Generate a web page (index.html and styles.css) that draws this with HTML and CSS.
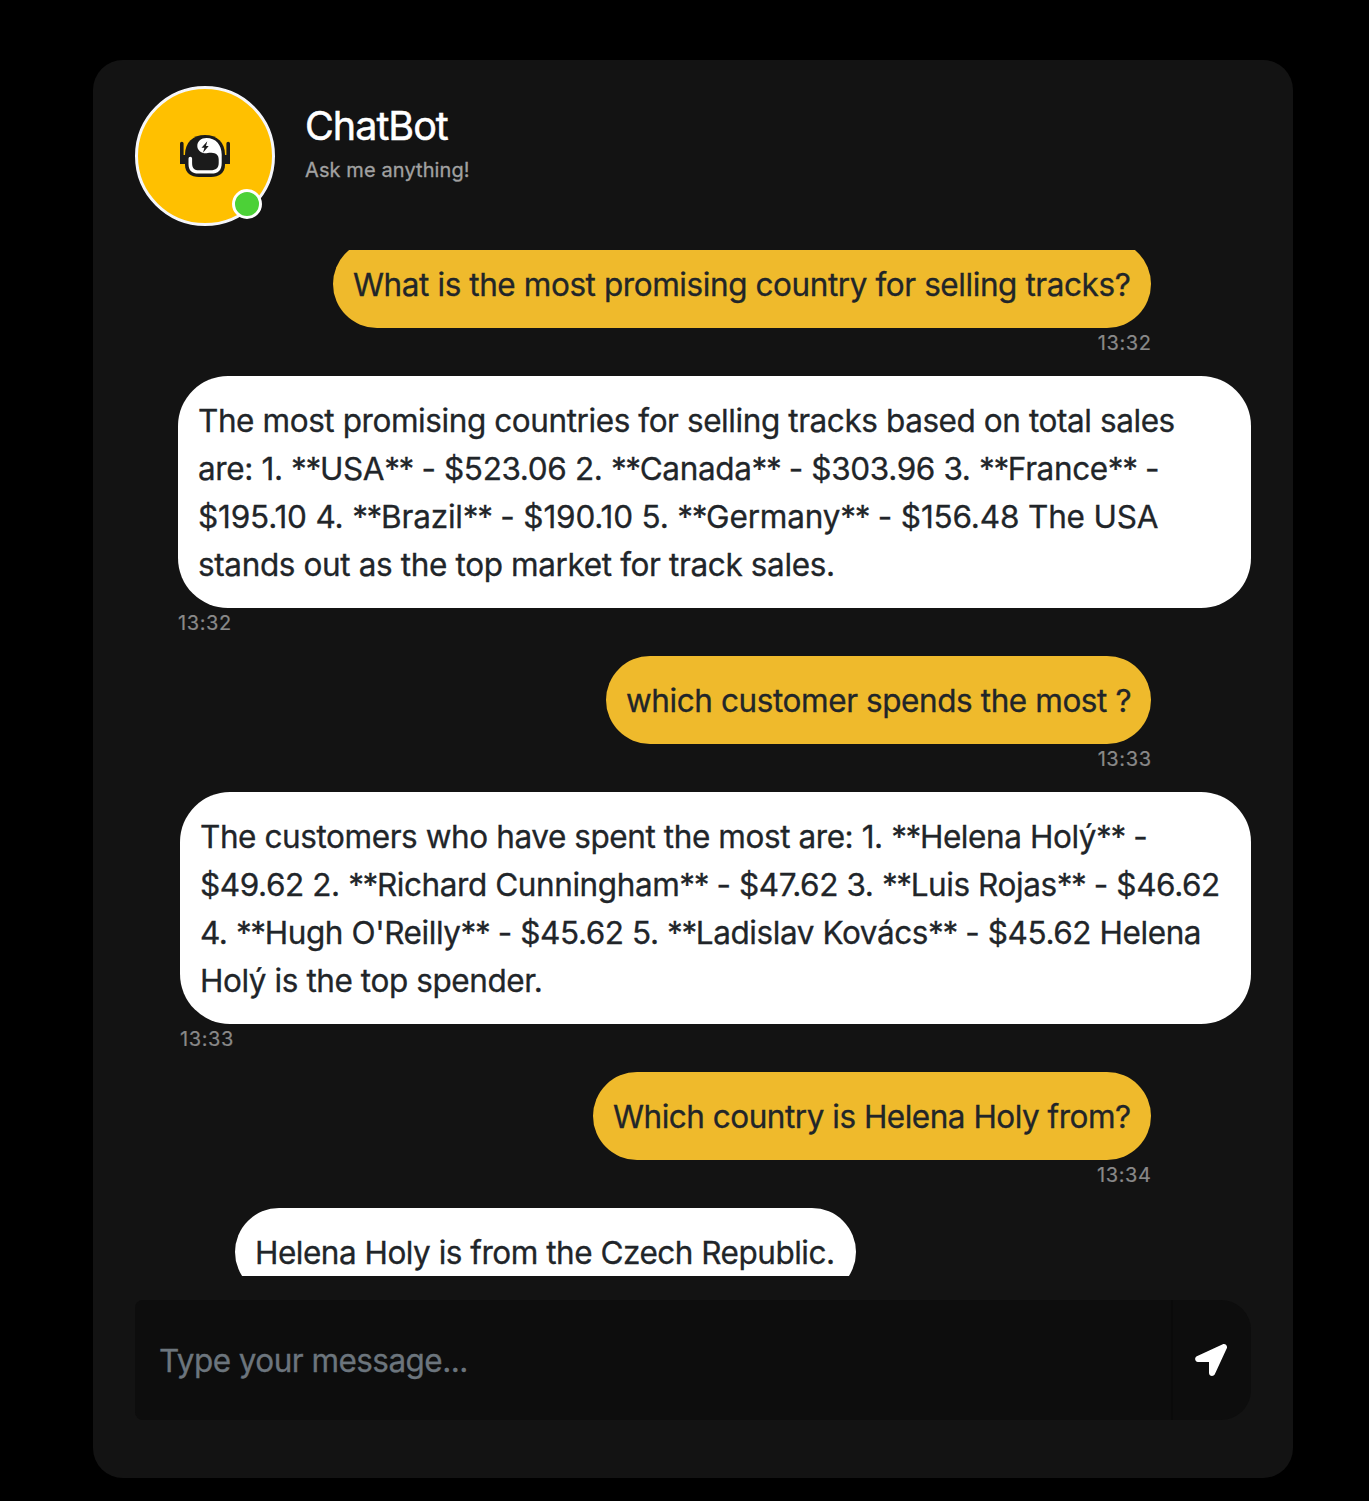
FILE: index.html
```html
<!DOCTYPE html>
<html lang="en">
<head>
<meta charset="utf-8">
<title>ChatBot</title>
<link rel="stylesheet" href="styles.css">
</head>
<body>
<main class="card">
  <header class="card-header">
    <div class="avatar">
      <svg class="robot" viewBox="0 0 50 42" width="50" height="42" aria-hidden="true">
        <path d="M0 8.500a1.800 1.800 0 0 1 3.600 0V20H6V29H0zM50 8.500a1.800 1.800 0 0 0-3.600 0V20H44V29H50z" fill="#1b1b1b"/>
        <path d="M5 19.500C5 7.500 13 0 25 0S45 7.500 45 19.500V30C45 38 39 42 31 42H19C11 42 5 38 5 30z" fill="#1b1b1b"/>
        <path d="M26.500 3C35.500 3 41.700 9.500 41.700 19.500V28C41.700 35.500 38 38.600 31.500 38.600H18.500C12 38.600 8.500 35.500 8.500 29V23.500a1.800 1.800 0 0 1 3.600 0V28C12.100 33.500 14.500 35.300 19 35.300H30.500C36 35.300 38.700 33 38.700 28V24.500C38.700 20 36 17.900 31.500 17.700C28 17.500 26.500 18.800 24 18.200C20 17.300 17.300 14.500 17.300 11C17.300 6.500 21 3 26.500 3z" fill="#fff"/>
        <path d="M27.300 6.300L21.500 12.700H24.400L23 17.700L28.700 11H26z" fill="#1b1b1b"/>
      </svg>
      <span class="status"></span>
    </div>
    <div class="identity">
      <h1 class="name">ChatBot</h1>
      <p class="tagline">Ask me anything!</p>
    </div>
  </header>
  <section class="messages">
    <div class="message user">
      <p class="bubble w-country"><span class="line">What is the most promising country for selling tracks?</span></p>
      <time class="time">13:32</time>
    </div>
    <div class="message bot w-sales">
      <p class="bubble"><span class="line">The most promising countries for selling tracks based on total sales</span><span class="line snug">are: 1. <i>**</i>USA<i>**</i> - $523.06 2. <i>**</i>Canada<i>**</i> - $303.96 3. <i>**</i>France<i>**</i> -</span><span class="line loose">$195.10 4. <i>**</i>Brazil<i>**</i> - $190.10 5. <i>**</i>Germany<i>**</i> - $156.48 The USA</span><span class="line snug">stands out as the top market for track sales.</span></p>
      <time class="time">13:32</time>
    </div>
    <div class="message user">
      <p class="bubble w-customer"><span class="line">which customer spends the most ?</span></p>
      <time class="time">13:33</time>
    </div>
    <div class="message bot w-spenders">
      <p class="bubble"><span class="line">The customers who have spent the most are: 1. <i>**</i>Helena Holý<i>**</i> -</span><span class="line">$49.62 2. <i>**</i>Richard Cunningham<i>**</i> - $47.62 3. <i>**</i>Luis Rojas<i>**</i> - $46.62</span><span class="line">4. <i>**</i>Hugh O'Reilly<i>**</i> - $45.62 5. <i>**</i>Ladislav Kovács<i>**</i> - $45.62 Helena</span><span class="line">Holý is the top spender.</span></p>
      <time class="time">13:33</time>
    </div>
    <div class="message user">
      <p class="bubble w-origin"><span class="line tight">Which country is Helena Holy from?</span></p>
      <time class="time">13:34</time>
    </div>
    <div class="message bot w-answer">
      <p class="bubble"><span class="line tight">Helena Holy is from the Czech Republic.</span></p>
    </div>
  </section>
  <footer class="card-footer">
    <form class="composer">
      <input class="field" type="text" placeholder="Type your message..." aria-label="Message">
      <button class="send" type="button" aria-label="Send">
        <svg viewBox="0 0 32 32" width="32" height="32"><path d="M27.800 .3L1.800 12.200C-.9 13.600-.2 18 3 18H14V29C14 32.200 18.400 33 19.800 30.200L31.800 4.200C32.800 1.800 30.200-.8 27.800 .3z" fill="#fff"/></svg>
      </button>
    </form>
  </footer>
</main>
</body>
</html>
```

FILE: styles.css
```css
* { box-sizing: border-box; }
body {
  margin: 0;
  height: 1501px;
  padding: 60px 76px 23px 93px;
  background: #000;
  font-family: Inter, "Noto Sans", sans-serif;
  overflow: hidden;
}
h1, p { margin: 0; font-weight: 400; }
.card {
  display: flex;
  flex-direction: column;
  width: 1200px;
  height: 1418px;
  border-radius: 30px;
  background: #131313;
  overflow: hidden;
}
.card-header {
  display: flex;
  gap: 30px;
  height: 190px;
  flex: none;
  padding: 26px 42px;
}
.avatar {
  position: relative;
  display: flex;
  align-items: center;
  justify-content: center;
  width: 140px;
  height: 140px;
  border: 3px solid #f5f6fa;
  border-radius: 50%;
  background: #ffc000;
}
.status {
  position: absolute;
  right: 10px;
  bottom: 4px;
  width: 30px;
  height: 30px;
  border: 3px solid #fff;
  border-radius: 50%;
  background: #4cd137;
}
.identity { padding-top: 16px; }
.name {
  font-size: 39.500px;
  line-height: 48px;
  letter-spacing: -1px;
  color: #fff;
  -webkit-text-stroke: .5px #fff;
}
.tagline {
  margin-top: 5px;
  font-size: 20px;
  line-height: 30px;
  letter-spacing: .1px;
  color: #a1a1a1;
  -webkit-text-stroke: .3px #a1a1a1;
}
.messages {
  display: flex;
  flex-direction: column;
  flex: none;
  gap: 18px;
  height: 1026px;
  overflow: hidden;
  padding: 0 42px;
}
.message {
  display: flex;
  flex-direction: column;
  flex: none;
}
.message:first-child { margin-top: -10px; }
.user { align-items: flex-end; padding-right: 100px; }
.bot { align-self: flex-end; align-items: flex-start; }
.bubble {
  padding: 21px 20px 19px;
  border-radius: 50px;
  font-size: 31.500px;
  line-height: 48px;
  letter-spacing: -.42px;
  color: #212529;
  -webkit-text-stroke: .3px #212529;
}
.line { display: block; white-space: nowrap; }
.line i { font-style: normal; letter-spacing: -1.4px; }
.tight { letter-spacing: -.49px; }
.snug { letter-spacing: -.37px; }
.loose { letter-spacing: -.16px; }
.user .bubble { background: #efba2c; }
.bot .bubble { width: 100%; background: #fff; }
.time {
  height: 30px;
  font-size: 20px;
  line-height: 30px;
  letter-spacing: .6px;
  color: #898989;
  -webkit-text-stroke: .2px #898989;
}
.user .time { margin-right: -.6px; }
.w-country { width: 818px; }
.w-customer { width: 545px; }
.w-origin { width: 558px; }
.w-sales { width: 1073px; }
.w-spenders { width: 1071px; }
.w-answer { width: 621px; align-self: flex-start; margin-left: 100px; }
.card-footer { padding: 24px 42px; }
.composer { display: flex; height: 120px; }
.field {
  flex: 1;
  min-width: 0;
  border: 0;
  border-radius: 8px 0 0 8px;
  padding: 2px 24px 0;
  background: #0d0d0d;
  font: 400 31.500px/48px Inter, "Noto Sans", sans-serif;
  letter-spacing: -.55px;
  color: #fff;
}
.field::placeholder { color: #6c757d; opacity: 1; -webkit-text-stroke: .3px #6c757d; }
.send {
  display: flex;
  align-items: center;
  justify-content: center;
  width: 80px;
  padding: 0 2px 0 0;
  border: 0;
  border-left: 2px solid #0a0a0a;
  border-radius: 0 30px 30px 0;
  background: #0d0d0d;
}
```
